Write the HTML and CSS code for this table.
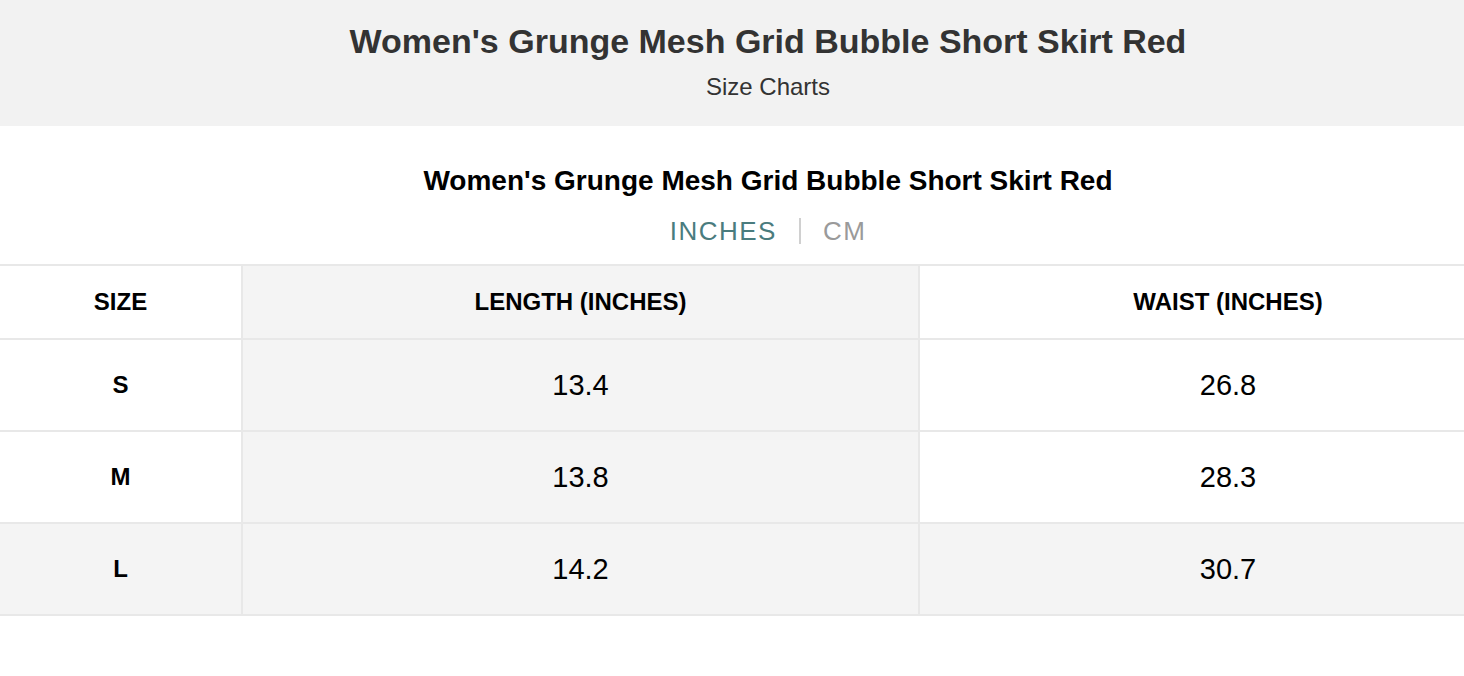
FILE: index.html
```html
<!DOCTYPE html>
<html>
<head>
<meta charset="utf-8">
<link rel="stylesheet" href="styles.css">
</head>
<body>
<div class="page">
  <header class="top">
    <h1 class="top-title">Women's Grunge Mesh Grid Bubble Short Skirt Red</h1>
    <div class="top-sub">Size Charts</div>
  </header>
  <section class="chart">
    <h2 class="chart-title">Women's Grunge Mesh Grid Bubble Short Skirt Red</h2>
    <div class="units">
      <span class="unit active">INCHES</span>
      <span class="sep"></span>
      <span class="unit">CM</span>
    </div>
    <table class="sizes">
      <colgroup>
        <col class="c1"><col class="c2"><col class="c3">
      </colgroup>
      <thead>
        <tr>
          <th>SIZE</th>
          <th class="hl">LENGTH (INCHES)</th>
          <th>WAIST (INCHES)</th>
        </tr>
      </thead>
      <tbody>
        <tr><th>S</th><td class="hl">13.4</td><td>26.8</td></tr>
        <tr><th>M</th><td class="hl">13.8</td><td>28.3</td></tr>
        <tr class="hover"><th>L</th><td class="hl">14.2</td><td>30.7</td></tr>
      </tbody>
    </table>
  </section>
</div>
</body>
</html>
```
FILE: styles.css
```css
html, body {
  margin: 0;
  padding: 0;
  background: #ffffff;
  overflow: hidden;
  font-family: "Liberation Sans", Arial, Helvetica, sans-serif;
}

.page {
  width: 1536px;
}

.top {
  background: #f2f2f2;
  height: 126px;
  box-sizing: border-box;
  padding-top: 21px;
  text-align: center;
  color: #333333;
}

.top-title {
  margin: 0;
  font-size: 34px;
  line-height: 40px;
  font-weight: bold;
}

.top-sub {
  margin-top: 12px;
  font-size: 24px;
  line-height: 28px;
}

.chart {
  text-align: center;
}

.chart-title {
  margin: 0;
  padding-top: 38px;
  font-size: 28px;
  line-height: 34px;
  font-weight: bold;
  color: #000000;
}

.units {
  display: flex;
  justify-content: center;
  align-items: center;
  gap: 22px;
  margin-top: 17px;
  height: 32px;
  font-size: 26px;
  letter-spacing: 1.5px;
}

.unit {
  color: #9a9a9a;
}

.unit.active {
  color: #4a7c7e;
}

.sep {
  width: 2px;
  height: 26px;
  background: #d0d0d0;
}

.sizes {
  width: 100%;
  margin-top: 17px;
  border-collapse: collapse;
  table-layout: fixed;
  border-top: 2px solid #e8e8e8;
}

.c1 { width: 242px; }
.c2 { width: 677px; }
.c3 { width: auto; }

.sizes th,
.sizes td {
  border-bottom: 2px solid #e8e8e8;
  border-left: 2px solid #e8e8e8;
  text-align: center;
  color: #000000;
  padding: 0;
}

.sizes tr > :first-child {
  border-left: none;
}

.sizes thead th {
  height: 72px;
  font-size: 24px;
  font-weight: bold;
}

.sizes tbody th {
  height: 90px;
  font-size: 24px;
  font-weight: bold;
}

.sizes tbody td {
  height: 90px;
  font-size: 29px;
}

.hl,
.hover th,
.hover td {
  background: #f4f4f4;
}
```
